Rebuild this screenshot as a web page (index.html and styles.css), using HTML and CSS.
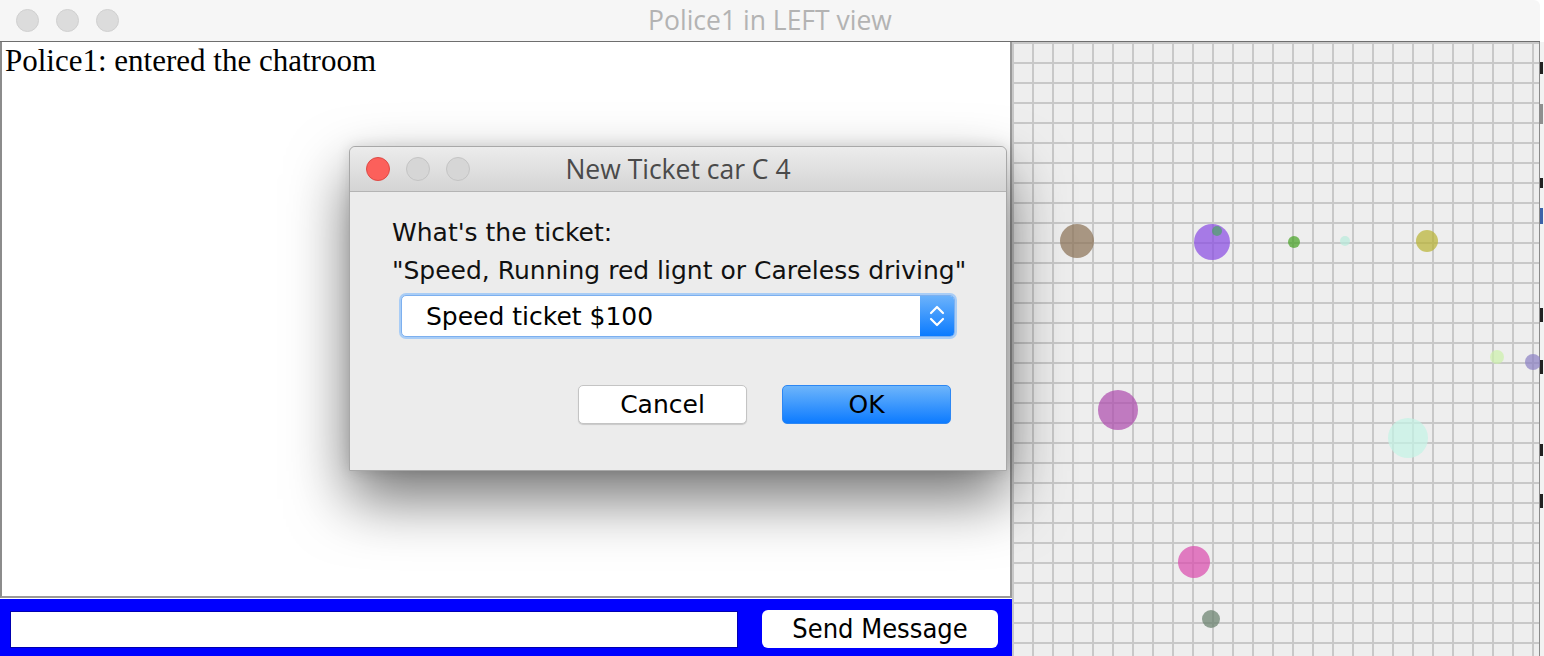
FILE: index.html
```html
<!DOCTYPE html>
<html>
<head>
<meta charset="utf-8">
<link rel="stylesheet" href="styles.css">
</head>
<body>
<div class="screen">
  <div class="window">
    <div class="titlebar">
      <div class="lights">
        <span class="light"></span><span class="light"></span><span class="light"></span>
      </div>
      <div class="title">Police1 in LEFT view</div>
    </div>
    <div class="content">
      <div class="left">
        <div class="chat">Police1: entered the chatroom</div>
        <div class="inputbar">
          <div class="field"></div>
          <div class="send">Send Message</div>
        </div>
      </div>
      <div class="grid">
        <span class="dot" style="left:48px;top:182px;width:34px;height:34px;background:rgba(138,112,84,.7)"></span>
        <span class="dot" style="left:182px;top:182px;width:36px;height:36px;background:rgba(135,72,227,.7)"></span>
        <span class="dot" style="left:200px;top:184px;width:10px;height:10px;background:rgba(60,170,80,.6)"></span>
        <span class="dot" style="left:276px;top:194px;width:12px;height:12px;background:rgba(69,162,34,.7)"></span>
        <span class="dot" style="left:328px;top:194px;width:10px;height:10px;background:rgba(184,235,219,.7)"></span>
        <span class="dot" style="left:404px;top:188px;width:22px;height:22px;background:rgba(184,178,49,.7)"></span>
        <span class="dot" style="left:478px;top:308px;width:14px;height:14px;background:rgba(204,241,169,.7)"></span>
        <span class="dot" style="left:513px;top:312px;width:16px;height:16px;background:rgba(138,127,195,.7)"></span>
        <span class="dot" style="left:86px;top:348px;width:40px;height:40px;background:rgba(172,72,172,.7)"></span>
        <span class="dot" style="left:376px;top:376px;width:40px;height:40px;background:rgba(195,244,230,.7)"></span>
        <span class="dot" style="left:166px;top:504px;width:32px;height:32px;background:rgba(218,72,172,.7)"></span>
        <span class="dot" style="left:190px;top:568px;width:18px;height:18px;background:rgba(102,127,107,.7)"></span>
      </div>
    </div>
  </div>
  <div class="edge">
    <div class="edge-top"></div>
    <div class="edge-body">
      <span class="frag f1"></span>
      <span class="frag f2"></span>
      <span class="frag f3"></span>
      <span class="frag f4"></span>
      <span class="frag f5"></span>
      <span class="frag f6"></span>
      <span class="frag f7"></span>
      <span class="frag f8"></span>
    </div>
  </div>

  <div class="dialog">
    <div class="dtitlebar">
      <div class="dlights">
        <span class="dlight red"></span><span class="dlight"></span><span class="dlight"></span>
      </div>
      <div class="dtitle">New Ticket car C 4</div>
    </div>
    <div class="dbody">
      <div class="msg">What's the ticket:</div>
      <div class="msg">"Speed, Running red lignt or Careless driving"</div>
      <div class="combo">
        <div class="combo-text">Speed ticket $100</div>
        <div class="combo-arrows">
          <svg width="18" height="30" viewBox="0 0 18 30">
            <path d="M3 12 L9 6 L15 12" fill="none" stroke="#fff" stroke-width="2.2" stroke-linecap="round" stroke-linejoin="round"/>
            <path d="M3 18 L9 24 L15 18" fill="none" stroke="#fff" stroke-width="2.2" stroke-linecap="round" stroke-linejoin="round"/>
          </svg>
        </div>
      </div>
      <div class="buttons">
        <div class="btn cancel">Cancel</div>
        <div class="btn ok">OK</div>
      </div>
    </div>
  </div>
</div>
</body>
</html>
```
FILE: styles.css
```css
* { box-sizing: border-box; }
html, body { margin: 0; padding: 0; }
body { width: 1544px; height: 656px; overflow: hidden; background: #ffffff; }

.screen { position: relative; display: flex; width: 1544px; height: 656px; }

.window {
  width: 1540px; height: 656px;
  display: flex; flex-direction: column;
  border-top-right-radius: 6px;
  overflow: hidden;
}

.titlebar {
  height: 42px; flex: none;
  background: #f6f6f6;
  border-bottom: 1px solid #6e6e6e;
  display: flex; align-items: center;
  position: relative;
}
.lights { display: flex; gap: 17px; padding-left: 16px; }
.light {
  width: 23px; height: 23px; border-radius: 50%;
  background: #dcdcdc; border: 1px solid #d0d0d0;
}
.title {
  position: absolute; left: 0; right: 0; top: 0; bottom: 0;
  display: flex; align-items: center; justify-content: center;
  font-family: "Open Sans", "Liberation Sans", sans-serif;
  font-size: 26.5px; color: #b3b3b3;
  padding-bottom: 2px;
}

.content { flex: 1; display: flex; min-height: 0; }

.left { width: 1012px; flex: none; display: flex; flex-direction: column; }
.chat {
  flex: 1;
  background: #ffffff;
  border-left: 2px solid #8c8c8c;
  border-right: 2px solid #9a9a9a;
  border-bottom: 2px solid #9a9a9a;
  padding: 0 3px;
  font-family: "Liberation Serif", "Times New Roman", serif;
  font-size: 31px; line-height: 38px; color: #000;
}
.inputbar {
  height: 57px; flex: none;
  margin-top: 1px;
  background: #0000ff;
  display: flex; align-items: center;
  padding: 0 14px 0 10px;
}
.field {
  width: 728px; height: 37px;
  background: #ffffff;
  border: 1px solid #0000b0;
  margin-top: 3px;
}
.send {
  margin-left: 24px;
  width: 236px; height: 38px;
  background: #ffffff;
  border-radius: 6px;
  display: flex; align-items: center; justify-content: center;
  font-family: "DejaVu Sans Condensed", "DejaVu Sans", sans-serif;
  font-stretch: condensed;
  font-size: 27px; color: #000;
  margin-top: 2px;
}

.grid {
  flex: 1; position: relative;
  background-color: #eeeeee;
  background-image:
    linear-gradient(to right, #c8c8c8 2px, transparent 2px),
    linear-gradient(to bottom, #c8c8c8 2px, transparent 2px);
  background-size: 20px 20px;
  border-right: 1px solid #8a8a8a;
}
.dot { position: absolute; border-radius: 50%; }

.edge { width: 4px; display: flex; flex-direction: column; }
.edge-top { height: 42px; background: #ffffff; }
.edge-body { flex: 1; position: relative; background: #f2f2f2; }
.frag { position: absolute; left: 0; width: 3px; background: #222; }
.f1 { top: 20px; height: 12px; }
.f2 { top: 62px; height: 20px; background: #8f8f8f; }
.f3 { top: 136px; height: 10px; }
.f4 { top: 166px; height: 16px; background: #3d62a8; }
.f5 { top: 266px; height: 14px; }
.f6 { top: 318px; height: 14px; }
.f7 { top: 402px; height: 12px; }
.f8 { top: 452px; height: 14px; }

.dialog {
  position: absolute; left: 349px; top: 146px;
  width: 658px; height: 325px;
  background: #ececec;
  border: 1px solid #a8a8a8;
  border-radius: 6px 6px 0 0;
  box-shadow: 0 28px 60px rgba(0,0,0,0.55), 0 0 14px rgba(0,0,0,0.12);
  display: flex; flex-direction: column;
  z-index: 5;
}
.dtitlebar {
  height: 45px; flex: none;
  background: linear-gradient(#ececec, #d4d4d4);
  border-bottom: 1px solid #b4b4b4;
  border-radius: 6px 6px 0 0;
  position: relative;
  display: flex; align-items: center;
}
.dlights { display: flex; gap: 16px; padding-left: 16px; }
.dlight {
  width: 24px; height: 24px; border-radius: 50%;
  background: #d6d6d6; border: 1px solid #c4c4c4;
}
.dlight.red { background: #fc605b; border-color: #de4a45; }
.dtitle {
  position: absolute; left: 0; right: 0; top: 0; bottom: 0;
  display: flex; align-items: center; justify-content: center;
  font-family: "Open Sans", "Liberation Sans", sans-serif;
  font-size: 26.5px; color: #4a4a4a;
  padding-right: 0;
}
.dbody {
  flex: 1;
  padding: 22px 0 0 42px;
  display: flex; flex-direction: column;
}
.msg {
  font-family: "DejaVu Sans", sans-serif;
  font-size: 25px; line-height: 38px; color: #111;
  white-space: nowrap;
}
.combo {
  margin: 5px 0 0 9px;
  width: 554px; height: 42px;
  background: #ffffff;
  border: 1px solid #7db0ef;
  box-shadow: 0 0 0 2px #a9cdf6;
  border-radius: 5px;
  display: flex; align-items: stretch;
}
.combo-text {
  flex: 1;
  display: flex; align-items: center;
  padding-left: 24px;
  font-family: "DejaVu Sans", sans-serif;
  font-size: 25px; color: #000;
}
.combo-arrows {
  width: 34px;
  background: linear-gradient(#6bb2fb, #0b7bff);
  border-radius: 0 4px 4px 0;
  display: flex; align-items: center; justify-content: center;
}
.buttons {
  margin-top: 48px;
  display: flex; justify-content: flex-end; gap: 35px;
  padding-right: 55px;
}
.btn {
  width: 169px; height: 39px;
  border-radius: 5px;
  display: flex; align-items: center; justify-content: center;
  font-family: "DejaVu Sans", sans-serif;
  font-size: 25px; color: #000;
}
.cancel {
  background: #ffffff;
  border: 1px solid #c4c4c4;
  box-shadow: 0 1px 1px rgba(0,0,0,0.15);
}
.ok {
  background: linear-gradient(#6db5fb, #0d7bff);
  border: 1px solid #2d87f3;
}
```
